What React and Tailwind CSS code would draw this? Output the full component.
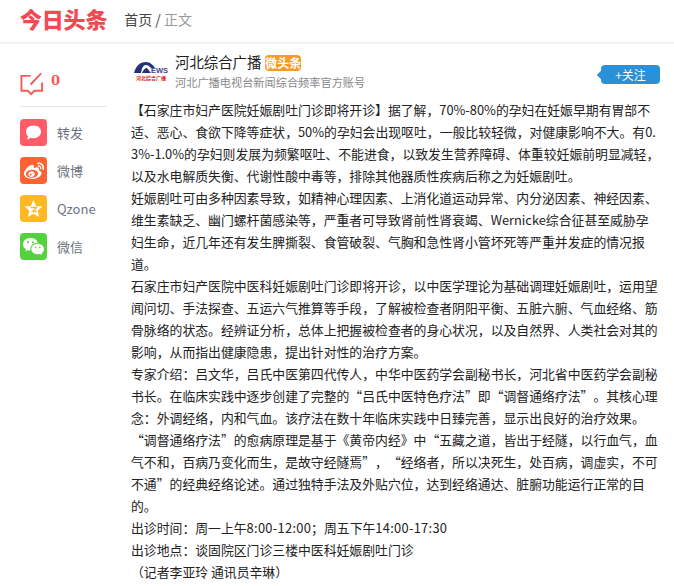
import React from "react";
import { RiWechatFill, RiWeiboFill } from "react-icons/ri";

const cjk = { fontFamily: '"Noto Sans CJK SC", "Liberation Sans", sans-serif' };

const paragraphs = [
  "【石家庄市妇产医院妊娠剧吐门诊即将开诊】据了解，70%-80%的孕妇在妊娠早期有胃部不适、恶心、食欲下降等症状，50%的孕妇会出现呕吐，一般比较轻微，对健康影响不大。有0.3%-1.0%的孕妇则发展为频繁呕吐、不能进食，以致发生营养障碍、体重较妊娠前明显减轻，以及水电解质失衡、代谢性酸中毒等，排除其他器质性疾病后称之为妊娠剧吐。",
  "妊娠剧吐可由多种因素导致，如精神心理因素、上消化道运动异常、内分泌因素、神经因素、维生素缺乏、幽门螺杆菌感染等，严重者可导致肾前性肾衰竭、Wernicke综合征甚至威胁孕妇生命，近几年还有发生脾撕裂、食管破裂、气胸和急性肾小管坏死等严重并发症的情况报道。",
  "石家庄市妇产医院中医科妊娠剧吐门诊即将开诊，以中医学理论为基础调理妊娠剧吐，运用望闻问切、手法探查、五运六气推算等手段，了解被检查者阴阳平衡、五脏六腑、气血经络、筋骨脉络的状态。经辨证分析，总体上把握被检查者的身心状况，以及自然界、人类社会对其的影响，从而指出健康隐患，提出针对性的治疗方案。",
  "专家介绍：吕文华，吕氏中医第四代传人，中华中医药学会副秘书长，河北省中医药学会副秘书长。在临床实践中逐步创建了完整的“吕氏中医特色疗法”即“调督通络疗法”。其核心理念：外调经络，内和气血。该疗法在数十年临床实践中日臻完善，显示出良好的治疗效果。",
  "“调督通络疗法”的愈病原理是基于《黄帝内经》中“五藏之道，皆出于经隧，以行血气，血气不和，百病乃变化而生，是故守经隧焉”，“经络者，所以决死生，处百病，调虚实，不可不通”的经典经络论述。通过独特手法及外贴穴位，达到经络通达、脏腑功能运行正常的目的。",
  <>
    出诊时间：周一上午<span className="tracking-[0.3px]">8:00-12:00</span>；周五下午<span className="tracking-[0.3px]">14:00-17:30</span>
  </>,
  "出诊地点：谈固院区门诊三楼中医科妊娠剧吐门诊",
  "（记者李亚玲 通讯员辛琳）",
];

const BubbleIcon = () => (
  <svg viewBox="0 0 27 27" className="w-[27px] h-[27px]">
    <rect width="27" height="27" rx="4" fill="#fd5c68" />
    <path d="M13.5 6.5c4.6 0 7.5 2.8 7.5 6.3s-2.9 6.4-7.5 6.4c-1 0-1.9-.1-2.8-.4l-3.5 2 .8-3.7C6.8 16 6 14.500 6 12.800 6 9.300 8.900 6.500 13.500 6.500z" fill="#fff" />
  </svg>
);

const WeiboIcon = () => (
  <div className="w-[27px] h-[27px] rounded bg-[#ff6232] flex items-center justify-center">
    <RiWeiboFill className="text-white text-[22px]" />
  </div>
);

const QzoneIcon = () => (
  <svg viewBox="0 0 27 27" className="w-[27px] h-[27px]">
    <rect width="27" height="27" rx="4" fill="#feb821" />
    <path d="M13.500 5l2.600 5.900 6.400.6-4.800 4.200 1.400 6.300-5.600-3.300-5.600 3.300 1.400-6.300-4.800-4.200 6.400-.6z" fill="#fff" />
    <path d="M10.500 12.500h6l-3.700 4h4" fill="none" stroke="#feb821" strokeWidth="1.400" />
  </svg>
);

const WechatIcon = () => (
  <div className="w-[27px] h-[27px] rounded bg-[#54d13e] flex items-center justify-center">
    <RiWechatFill className="text-white text-[23px]" />
  </div>
);

const shareItems = [
  { label: "转发", icon: <BubbleIcon /> },
  { label: "微博", icon: <WeiboIcon /> },
  { label: "Qzone", icon: <QzoneIcon /> },
  { label: "微信", icon: <WechatIcon /> },
];

const Sidebar = () => (
  <aside className="w-[87px] ml-[20px] shrink-0 pt-[28px]">
    <div className="flex items-start gap-[7px] h-[35px] border-b border-[#e8e8e8]">
      <svg viewBox="0 0 25 25" className="w-[24px] h-[24px]">
        <path d="M11 4H1.500v15.500h6.500l3.500 3.500 3.500-3.500h8V11" fill="none" stroke="#f85959" strokeWidth="2" />
        <path d="M11 13L22 1.500" fill="none" stroke="#f85959" strokeWidth="2" />
      </svg>
      <span className="text-[#f85959] text-[13px] font-bold leading-[18px]" style={{ fontFamily: '"DejaVu Serif", serif' }}>
        0
      </span>
    </div>
    <div className="mt-[12px] flex flex-col gap-[11px]">
      {shareItems.map((item) => (
        <div key={item.label} className="flex items-center gap-[10px]">
          {item.icon}
          <span className="text-[13px] text-[#6b7280]">{item.label}</span>
        </div>
      ))}
    </div>
  </aside>
);

const AuthorRow = () => (
  <div className="flex items-start relative h-[54px]">
    <div className="w-[36px] ml-[2px] mt-[18px] shrink-0 flex flex-col items-center gap-[2px]">
      <svg viewBox="0 0 34 11" className="w-[34px] h-[11px]">
        <path d="M0 11C2 3 7 0 12 0c4 0 7 3 9 6h-4c-2-2-3-3-5-3-3 0-4 3-5 8z M8 11c1-3 3-5 5-5l4 5z" fill="#23317d" />
        <text x="17" y="10.500" fontSize="7.500" fontWeight="700" fill="#3b4a8c" fontFamily="Liberation Sans, sans-serif">EWS</text>
      </svg>
      <span className="text-[5px] leading-[6px] font-bold text-[#d8232a] whitespace-nowrap">河北综合广播</span>
    </div>
    <div className="ml-[6px] pt-[11px]">
      <div className="flex items-start h-[20px]">
        <span className="text-[14.4px] text-[#222] mt-[-1px] leading-[16px]">河北综合广播</span>
        <span className="ml-[4px] w-[36px] h-[16px] rounded-sm bg-[#fa9a26] text-white text-[12px] font-bold leading-[16px] text-center whitespace-nowrap">微头条</span>
      </div>
      <p className="text-[11.2px] leading-[14px] text-[#888]">河北广播电视台新闻综合频率官方账号</p>
    </div>
    <button className="absolute left-[470px] top-[21px] w-[59px] h-[19px] rounded-sm bg-[#2a90d7] text-white text-[12px] leading-[19px] text-center">
      +关注
      <span className="absolute left-[-3px] top-[7px] w-[6px] h-[6px] rotate-45 bg-[#2a90d7]"></span>
    </button>
  </div>
);

export default function App() {
  return (
    <div className="w-[674px] h-[586px] overflow-hidden bg-white" style={cjk}>
      <header className="h-[44px] border-b-2 border-[#f2f2f2] flex items-center pb-[3px]">
        <span className="ml-[20px] -mt-[4px] text-[#f04a52] text-[22px] font-black tracking-[-0.2px] leading-[28px]">今日头条</span>
        <nav className="ml-[17px] -mt-[1px] text-[14px] text-[#444]">
          首页 / <span className="text-[#999]">正文</span>
        </nav>
      </header>
      <main className="flex">
        <Sidebar />
        <section className="ml-[24px] w-[530px]">
          <AuthorRow />
          <article className="mt-[1px] text-[12.85px] leading-[22px] text-[#222] break-all [text-spacing-trim:space-all]">
            {paragraphs.map((text, i) => (
              <p key={i}>{text}</p>
            ))}
          </article>
        </section>
      </main>
    </div>
  );
}
